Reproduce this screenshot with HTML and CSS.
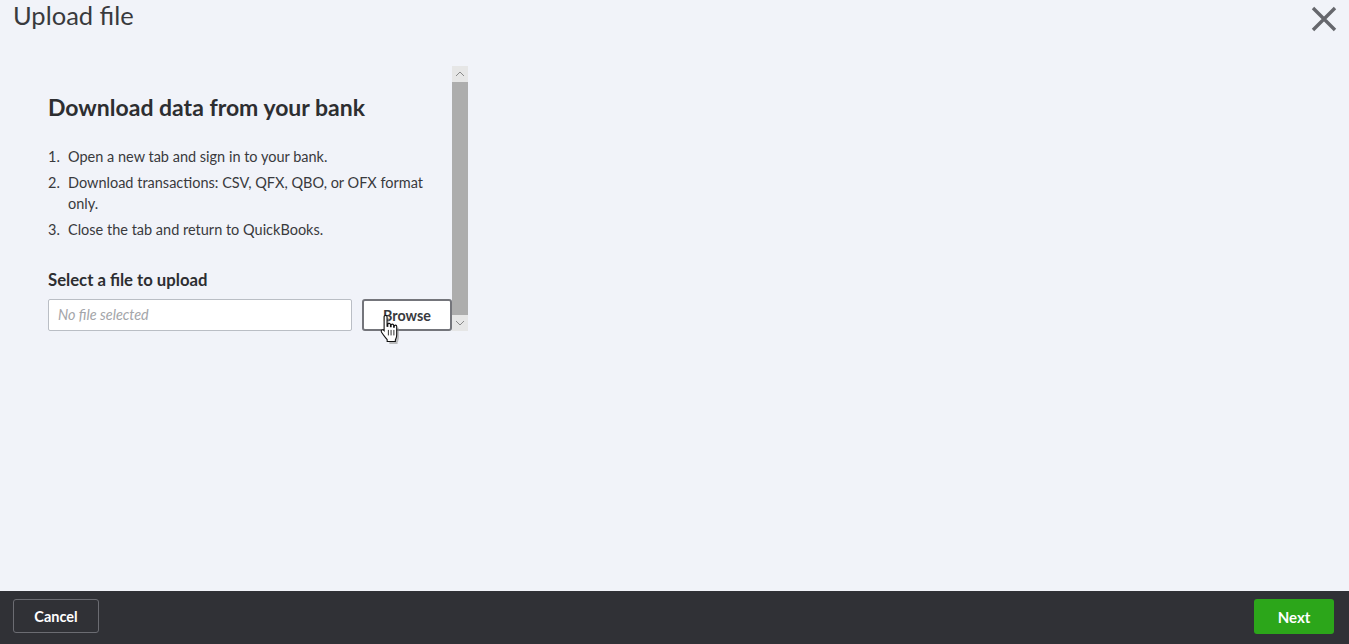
FILE: index.html
```html
<!DOCTYPE html>
<html lang="en">
<head>
<meta charset="utf-8">
<title>Upload file</title>
<link rel="stylesheet" href="styles.css">
</head>
<body>
<div class="page">
  <main class="main">
    <header class="topbar">
      <h1 class="title">Upload file</h1>
      <button class="close" aria-label="Close">
        <svg class="close-icon" width="26" height="26" viewBox="0 0 26 26"><path d="M2 2L24 24M24 2L2 24" fill="none" stroke="#66676d" stroke-width="3.4"/></svg>
      </button>
    </header>
    <section class="frame">
      <div class="content">
        <h2 class="heading">Download data from your bank</h2>
        <ol class="steps">
          <li class="step"><span class="num">1.</span><span>Open a new tab and sign in to your bank.</span></li>
          <li class="step"><span class="num">2.</span><span>Download transactions: CSV, QFX, QBO, or OFX format only.</span></li>
          <li class="step"><span class="num">3.</span><span>Close the tab and return to QuickBooks.</span></li>
        </ol>
        <div class="label">Select a file to upload</div>
        <div class="file-row">
          <div class="file-input">No file selected</div>
          <button class="browse">Browse</button>
        </div>
      </div>
      <div class="scrollbar">
        <div class="arrow"><svg width="10" height="6" viewBox="0 0 10 6"><path d="M1 5L5 1L9 5" fill="none" stroke="#8a8a8a"/></svg></div>
        <div class="thumb"></div>
        <div class="arrow"><svg width="10" height="6" viewBox="0 0 10 6"><path d="M1 1L5 5L9 1" fill="none" stroke="#8a8a8a"/></svg></div>
      </div>
      <svg class="cursor" width="22" height="30" viewBox="0 0 18 24.5">
        <path d="M5.8 3.2c0-1.5 2.4-1.5 2.4 0V11l.6.1V9.6c0-1.3 2.2-1.3 2.2 0v1.7h.5v-1.1c0-1.2 2.1-1.2 2.1 0v1.5h.5V11c0-1.2 2-1.2 2 0v7c0 2.3-.6 3-1.1 4.3v1.2H8.3V22c-1.3-1.7-3-3.6-4.6-6.1-.9-1.4.7-2.7 1.9-1.5l.2.2z" fill="#8c8c8c" opacity=".55" transform="translate(1 1)"/>
        <path d="M5 2.2c0-1.5 2.4-1.5 2.4 0V10l.6.1V8.6c0-1.3 2.2-1.3 2.2 0v1.7h.5V9.2c0-1.2 2.1-1.2 2.1 0v1.5h.5v-.7c0-1.2 2-1.2 2 0v7c0 2.3-.6 3-1.1 4.3v1.2H7.5v-1.5c-1.3-1.7-3-3.6-4.6-6.1-.9-1.4.7-2.7 1.9-1.5l.2.2z" fill="#fff" stroke="#111" stroke-width=".9"/>
        <path d="M8.5 13v4.5M10.7 13v4.5M13 13v4.5" fill="none" stroke="#111" stroke-width=".7"/>
      </svg>
    </section>
  </main>
  <footer class="footer">
    <button class="btn-cancel">Cancel</button>
    <button class="btn-next">Next</button>
  </footer>
</div>
</body>
</html>
```

FILE: styles.css
```css
* { box-sizing: border-box; }
html, body { margin: 0; height: 100%; overflow: hidden; }
body {
  font-family: "Lato", "Open Sans", sans-serif;
  color: #393a3d;
  background: #f1f3f9;
}
.page { display: flex; flex-direction: column; height: 644px; }
.main { flex: 1; min-height: 0; display: flex; flex-direction: column; }
.topbar {
  display: flex;
  justify-content: space-between;
  align-items: flex-start;
  height: 66px;
  padding: 0 12px 0 13px;
}
.title {
  margin: 0;
  font-size: 25.5px;
  font-weight: 400;
  line-height: 31px;
  color: #393a3d;
}
.close {
  border: 0;
  background: none;
  padding: 0;
  margin-top: 6px;
  width: 26px;
  height: 26px;
  display: block;
}
.close-icon { display: block; }
.frame {
  position: relative;
  display: flex;
  width: 436px;
  height: 265px;
  margin-left: 32px;
}
.content { flex: 1; min-width: 0; padding: 0 0 0 16px; }
.heading {
  margin: 26px 0 0;
  font-size: 23px;
  line-height: 30px;
  font-weight: 700;
  color: #2d2e31;
}
.steps { list-style: none; margin: 24px 16px 0 0; padding: 0; font-size: 14.5px; line-height: 21px; }
.step { display: flex; margin-bottom: 5px; }
.num { flex: 0 0 20px; }
.label {
  margin-top: 29px;
  font-size: 16.7px;
  line-height: 22px;
  font-weight: 700;
  color: #2d2e31;
}
.file-row { display: flex; margin-top: 8px; gap: 10px; }
.file-input {
  width: 304px;
  height: 32px;
  background: #fff;
  border: 1px solid #babec5;
  border-radius: 2px;
  padding: 0 9px;
  font-size: 14.4px;
  line-height: 30px;
  font-style: italic;
  color: #a3a5a9;
}
.browse {
  width: 90px;
  height: 32px;
  background: #fff;
  border: 2px solid #74757b;
  border-radius: 3px;
  padding: 0;
  font-family: inherit;
  font-size: 14.3px;
  font-weight: 700;
  color: #393a3d;
}
.scrollbar {
  flex: 0 0 16px;
  display: flex;
  flex-direction: column;
  background: #e6e6e6;
}
.arrow { height: 16px; display: flex; align-items: center; justify-content: center; }
.thumb { flex: 1; background: #adadad; }
.cursor { position: absolute; left: 346px; top: 248px; }
.footer {
  flex: 0 0 53px;
  background: #303136;
  display: flex;
  justify-content: space-between;
  align-items: flex-start;
  padding: 8px 15px 0 13px;
}
.btn-cancel {
  width: 86px;
  height: 34px;
  background: transparent;
  border: 1px solid #6b6c72;
  border-radius: 3px;
  color: #fff;
  font-family: inherit;
  font-size: 14.5px;
  font-weight: 700;
  padding: 0;
}
.btn-next {
  width: 80px;
  height: 35px;
  background: #2ca61a;
  border: 0;
  border-radius: 3px;
  color: #fff;
  font-family: inherit;
  font-size: 15px;
  font-weight: 700;
  padding: 0;
}
```
